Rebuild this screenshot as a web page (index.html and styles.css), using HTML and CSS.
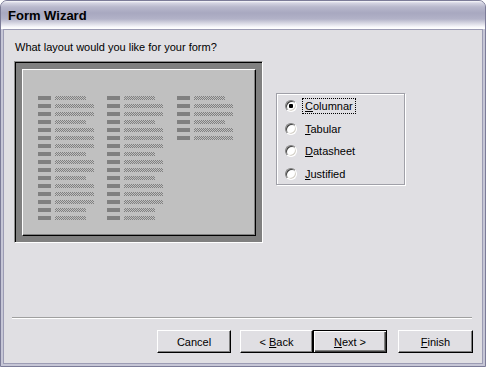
FILE: index.html
```html
<!doctype html>
<html lang="en">
<head>
	<meta charset="utf-8">
	<title>Form Wizard</title>
	<link rel="stylesheet" href="styles.css">
</head>

<body>
	<div class="window">
		<div class="titlebar">Form Wizard</div>

		<div class="dialog">
			<p class="prompt">What layout would you like for your form?</p>

			<div class="main">
				<!-- preview of the chosen layout -->
				<div class="preview">
					<div class="sheet">
						<div class="col">
							<div class="fld s"></div><div class="fld"></div><div class="fld"></div><div class="fld s"></div>
							<div class="fld"></div><div class="fld"></div><div class="fld"></div><div class="fld s"></div>
							<div class="fld"></div><div class="fld"></div><div class="fld s"></div><div class="fld"></div>
							<div class="fld"></div><div class="fld"></div><div class="fld s"></div><div class="fld s"></div>
						</div>
						<div class="col">
							<div class="fld s"></div><div class="fld"></div><div class="fld"></div><div class="fld s"></div>
							<div class="fld"></div><div class="fld"></div><div class="fld"></div><div class="fld s"></div>
							<div class="fld"></div><div class="fld"></div><div class="fld s"></div><div class="fld"></div>
							<div class="fld"></div><div class="fld"></div><div class="fld s"></div><div class="fld s"></div>
						</div>
						<div class="col">
							<div class="fld s"></div><div class="fld"></div><div class="fld"></div><div class="fld s"></div>
							<div class="fld"></div><div class="fld"></div>
						</div>
					</div>
				</div>

				<div class="options">
					<div class="opt"><span class="radio on"></span><span class="lbl focus"><u>C</u>olumnar</span></div>
					<div class="opt"><span class="radio"></span><span class="lbl"><u>T</u>abular</span></div>
					<div class="opt"><span class="radio"></span><span class="lbl"><u>D</u>atasheet</span></div>
					<div class="opt"><span class="radio"></span><span class="lbl"><u>J</u>ustified</span></div>
				</div>
			</div>

			<div class="sep"></div>

			<div class="buttons">
				<button class="btn cancel">Cancel</button>
				<button class="btn back">&lt; <u>B</u>ack</button>
				<button class="btn next default"><u>N</u>ext &gt;</button>
				<button class="btn finish"><u>F</u>inish</button>
			</div>
		</div>
	</div>
</body>
</html>
```

FILE: styles.css
```css
* {
	margin: 0;
	padding: 0;
	box-sizing: border-box;
}

body {
	background: #fff;
	font-family: "Liberation Sans", Arial, sans-serif;
	font-size: 11px;
	color: #000;
}

.window {
	width: 486px;
	height: 367px;
	border: 1px solid #7c7c98;
	border-radius: 7px 7px 0 0;
	background: #c6c6d6;
	display: flex;
	flex-direction: column;
	overflow: hidden;
}

.titlebar {
	height: 28px;
	flex: none;
	padding: 1px 0 0 7px;
	display: flex;
	align-items: center;
	font-size: 13px;
	font-weight: bold;
	background: linear-gradient(to bottom, #fafafc 0px, #d4d4e2 2px, #b8b8cc 6px, #a8a8c0 12px, #b2b2c8 18px, #d6d6e2 22px, #f8f8fb 26px, #ffffff 28px);
}

.dialog {
	flex: 1;
	margin: 0 2px 2px;
	border: 1px solid #9c9cb4;
	background: #e0dfe3;
	display: flex;
	flex-direction: column;
}

.prompt {
	margin: 11px 0 0 11px;
	line-height: 13px;
}

.main {
	display: flex;
	align-items: flex-start;
	margin: 7px 0 0 10px;
}

/* sunken frame round the sample */
.preview {
	width: 249px;
	height: 182px;
	background: #808080;
	border-style: solid;
	border-width: 1px;
	border-color: #8e8e8e #fff #fff #8e8e8e;
	padding: 6px;
	box-shadow: inset 1px 1px #000;
	padding: 7px 6px 6px 7px;
}

.sheet {
	height: 100%;
	background: #c0c0c0;
	border-style: solid;
	border-width: 1px;
	border-color: #fff #000 #000 #fff;
	box-shadow: inset -1px -1px #808080;
	display: grid;
	grid-template-columns: 56px 57px 56px;
	column-gap: 13px;
	align-items: start;
	padding: 26px 0 0 15px;
}

.col {
	display: flex;
	flex-direction: column;
	gap: 4px;
}

.fld {
	display: flex;
	gap: 4px;
	height: 4px;
}
.fld::before {
	content: "";
	width: 13px;
	background: #808080;
}
.fld::after {
	content: "";
	width: 39px;
	background: repeating-conic-gradient(#808080 0 25%, #c0c0c0 0 50%) 0 0 / 2px 2px;
}
.fld.s::after {
	width: 31px;
}

.options {
	margin: 32px 0 0 13px;
	width: 129px;
	height: 92px;
	border: 1px solid #a0a0a8;
	box-shadow: inset 1px 1px #fff, 1px 1px #fff;
	padding: 4px 0 0 8px;
	display: flex;
	flex-direction: column;
	gap: 6.5px;
}

.opt {
	display: flex;
	align-items: center;
	height: 16px;
}

.radio {
	width: 12px;
	height: 12px;
	border-radius: 50%;
	border: 1px solid;
	border-color: #808080 #fff #fff #808080;
	box-shadow: inset 1px 1px #404040, inset -1px -1px #d4d0c8;
	background: #fff;
	margin-right: 5px;
	display: flex;
	align-items: center;
	justify-content: center;
}
.radio.on::after {
	content: "";
	width: 4px;
	height: 4px;
	border-radius: 1px;
	background: #000;
}

.lbl {
	line-height: 14px;
	padding: 0 2px;
	border: 1px solid transparent;
}
.lbl.focus {
	border: 1px dotted #000;
}

.sep {
	margin: auto 10px 0 8px;
	height: 2px;
	border-top: 1px solid #a0a0a0;
	border-bottom: 1px solid #fff;
}

.buttons {
	display: flex;
	margin: 11px 0 10px 153px;
}

.btn {
	height: 23px;
	width: 74px;
	font-family: inherit;
	font-size: 11px;
	color: #000;
	background: #e0dfe3;
	border-style: solid;
	border-width: 1px;
	border-color: #fff #000 #000 #fff;
	box-shadow: inset -1px -1px #808080;
}
.back {
	margin-left: 9px;
	width: 73px;
}
.finish {
	margin-left: 11px;
	width: 75px;
}
.btn.default {
	border-color: #000;
	box-shadow: inset 1px 1px #fff, inset -1px -1px #404040, inset -2px -2px #808080;
}
```
